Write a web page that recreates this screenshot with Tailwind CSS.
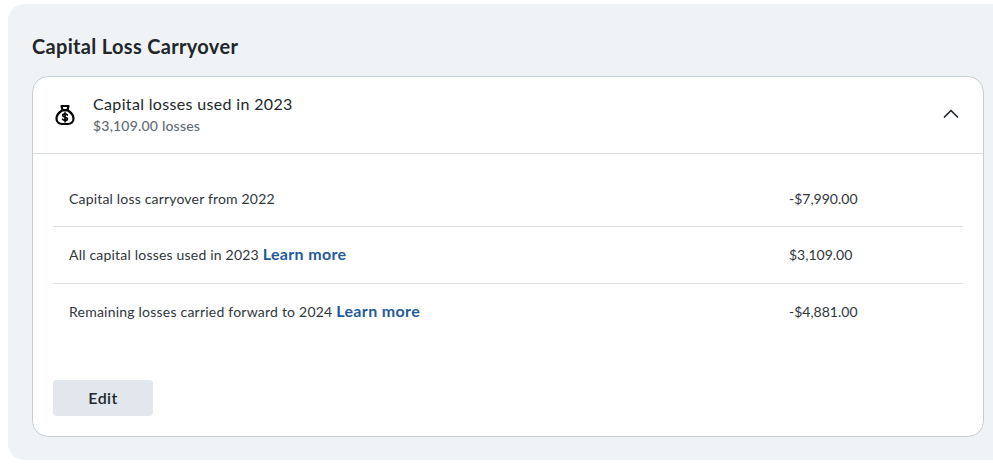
<!doctype html>
<html><head><meta charset="utf-8"><script src="https://cdn.jsdelivr.net/npm/@tailwindcss/browser@4"></script></head>
<body class="bg-white overflow-hidden font-['Lato',sans-serif]">
<div class="w-[993px] h-[468px] pt-1 pl-2">
<section class="h-[456px] bg-[#f0f3f6] rounded-l-2xl pl-6 pr-[9px] pt-[28px]">
<h2 class="h-[28px] text-[20px] leading-[28px] font-bold tracking-[0.32px] text-[#21262a] mb-4">Capital Loss Carryover</h2>
<div class="h-[361px] bg-white border border-[#c5ced4] rounded-2xl">
<div class="h-[77px] border-b border-[#d9dee2] flex items-center pl-[20px] pr-6">
<svg class="w-[24px] h-[24px] text-black mr-[16px]" viewBox="0 0 24 24" fill="none" stroke="currentColor" stroke-width="2.200" stroke-linejoin="round" stroke-linecap="round"><path d="M8.500 3h7l-1 4h-5z"/><path d="M9 7.500C6 9.500 3.500 12.500 3.500 15.500c0 3.500 2.500 5.500 5.500 5.500h6c3 0 5.500-2 5.500-5.500 0-3-2.500-6-5.500-8z"/><path stroke-width="1.700" d="M14.300 12c-.5-.9-1.300-1.200-2.300-1.200-1.300 0-2.300.6-2.300 1.700 0 2.300 4.700 1.100 4.700 3.300 0 1.100-1.100 1.700-2.400 1.700-1 0-1.900-.4-2.400-1.300M12 9.800v9"/></svg>
<div class="flex-1 -mt-[2px]">
<div class="text-[16px] leading-[22px] tracking-[0.34px] text-[#21262a]">Capital losses used in 2023</div>
<div class="mt-px text-[14px] leading-[20px] font-medium tracking-[0.2px] text-[#5f6b73]">$3,109.00 losses</div>
</div>
<svg class="w-[16px] h-[16px] -mt-[2px] text-[#21262a]" viewBox="0 0 16 16" fill="none" stroke="currentColor" stroke-width="1.700" stroke-linecap="round" stroke-linejoin="round"><path d="M1.500 11 8 4.500 14.500 11"/></svg>
</div>
<div class="px-5 pt-[17px]">
<div class="h-[56px] border-b border-[#d9dee2] flex items-center pl-4 text-[14px] text-[#30363b]"><span class="w-[720px] tracking-[0.18px]">Capital loss carryover from 2022</span><span>-$7,990.00</span></div>
<div class="h-[57px] border-b border-[#d9dee2] flex items-center pl-4 pb-[2px] text-[14px] text-[#30363b]"><span class="w-[720px] tracking-[0.2px]">All capital losses used in 2023 <a class="text-[16px] font-bold tracking-[0.35px] text-[#1f5b9b]">Learn more</a></span><span>$3,109.00</span></div>
<div class="h-[56px] flex items-center pl-4 pb-[2px] text-[14px] text-[#30363b]"><span class="w-[720px] tracking-[0.22px]">Remaining losses carried forward to 2024 <a class="text-[16px] font-bold tracking-[0.35px] text-[#1f5b9b]">Learn more</a></span><span>-$4,881.00</span></div>
<button class="mt-[40px] w-[100px] h-[36px] bg-[#e2e6ed] rounded text-[16px] font-semibold tracking-[0.4px] text-[#21262a]">Edit</button>
</div>
</div>
</section>
</div>
</body></html>
